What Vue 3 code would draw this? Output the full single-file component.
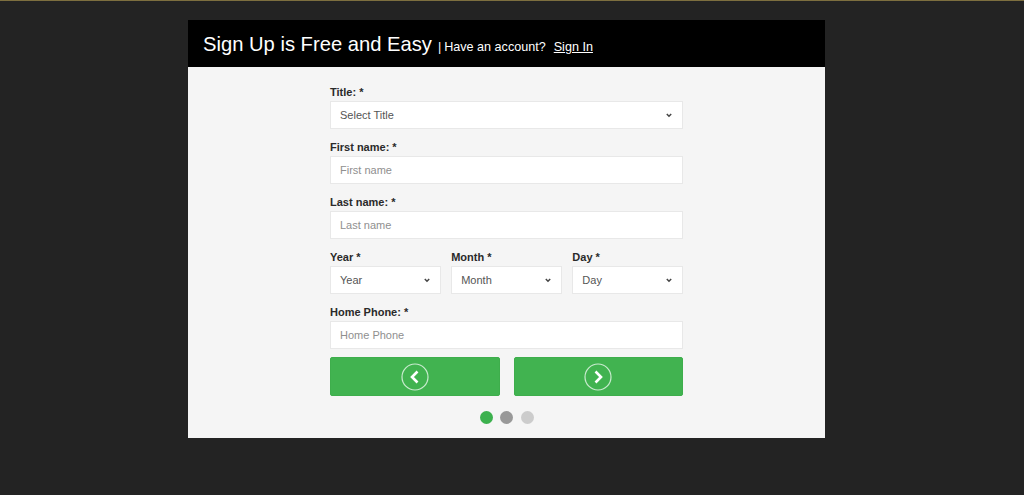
<script setup>
const fullFields = { first: 'First name', last: 'Last name' }
const dates = ['Year', 'Month', 'Day']
const dots = ['green', 'mid', 'light']
</script>

<template>
  <div class="page">
    <div class="card">
      <header class="head">
        <span class="big">Sign Up is Free and Easy</span>
        <span class="sep">|</span>
        <span class="have">Have an account?</span>
        <a class="signin">Sign In</a>
      </header>
      <form class="form">
        <label class="lab">Title: *</label>
        <div class="ctl sel"><span class="val">Select Title</span><svg class="car" width="6" height="5" viewBox="0 0 6 5"><path d="M.8 1 3 3.2 5.200 1" fill="none" stroke="#444" stroke-width="1.5"/></svg></div>
        <template v-for="(v, k) in fullFields" :key="k">
          <label class="lab next">{{ v }}: *</label>
          <div class="ctl"><span class="ph">{{ v }}</span></div>
        </template>
        <div class="dates">
          <div v-for="d in dates" :key="d" class="dcol">
            <label class="lab">{{ d }} *</label>
            <div class="ctl sel"><span class="val">{{ d }}</span><svg class="car" width="6" height="5" viewBox="0 0 6 5"><path d="M.8 1 3 3.2 5.200 1" fill="none" stroke="#444" stroke-width="1.5"/></svg></div>
          </div>
        </div>
        <label class="lab next">Home Phone: *</label>
        <div class="ctl"><span class="ph">Home Phone</span></div>
        <div class="btns">
          <button type="button" class="btn">
            <svg width="28" height="28" viewBox="0 0 28 28"><circle cx="14" cy="14" r="13" fill="none" stroke="#c9ebcf" stroke-width="1.2"/><path d="M16.500 8.500 11 14l5.500 5.500" fill="none" stroke="#fff" stroke-width="2.600"/></svg>
          </button>
          <button type="button" class="btn">
            <svg width="28" height="28" viewBox="0 0 28 28"><circle cx="14" cy="14" r="13" fill="none" stroke="#c9ebcf" stroke-width="1.2"/><path d="M11.500 8.500 17 14l-5.500 5.500" fill="none" stroke="#fff" stroke-width="2.600"/></svg>
          </button>
        </div>
        <div class="dots"><span v-for="d in dots" :key="d" class="dot" :class="d"></span></div>
      </form>
    </div>
  </div>
</template>

<style>
html, body { margin: 0; background: #232323; }
</style>

<style scoped>
.page {
  height: 495px;
  box-sizing: border-box;
  background: #232323;
  border-top: 1px solid #7d6f3f;
  padding-top: 19px;
  font-family: "Liberation Sans", Arial, sans-serif;
  overflow: hidden;
}
.card { width: 637px; margin-left: 188px; background: #f5f5f5; height: 418px; }
.head {
  height: 47px;
  background: #000;
  color: #fff;
  display: flex;
  align-items: baseline;
  padding: 13px 0 0 15px;
  box-sizing: border-box;
}
.big { font-size: 20.2px; }
.sep { font-size: 12.6px; margin-left: 6px; }
.have { font-size: 12.6px; margin-left: 3px; }
.signin { font-size: 12.6px; margin-left: 8px; text-decoration: underline; }
.form { width: 353px; margin-left: 142px; padding-top: 19px; }
.lab { display: block; font-size: 11px; font-weight: 700; color: #2a2a2a; line-height: 13px; margin-bottom: 2px; }
.lab.next { margin-top: 12px; }
.ctl {
  height: 28px;
  box-sizing: border-box;
  background: #fff;
  border: 1px solid #e8e8e8;
  display: flex;
  align-items: center;
  justify-content: space-between;
  padding: 0 10px 0 9px;
  font-size: 11px;
}
.val { color: #555; }
.ph { color: #8f8f8f; }
.dates { display: flex; gap: 10.5px; margin-top: 12px; }
.dcol { flex: 1; }
.btns { display: flex; gap: 14px; margin-top: 8px; }
.btn {
  flex: 1;
  height: 39px;
  padding: 0;
  background: #41b350;
  border: 1px solid #3eae4c;
  border-radius: 2px;
  display: flex;
  align-items: center;
  justify-content: center;
}
.dots { display: flex; justify-content: center; gap: 7.5px; margin-top: 15px; }
.dot { width: 13px; height: 13px; border-radius: 50%; }
.green { background: #3cb14e; }
.mid { background: #999; }
.light { background: #ccc; }
</style>
